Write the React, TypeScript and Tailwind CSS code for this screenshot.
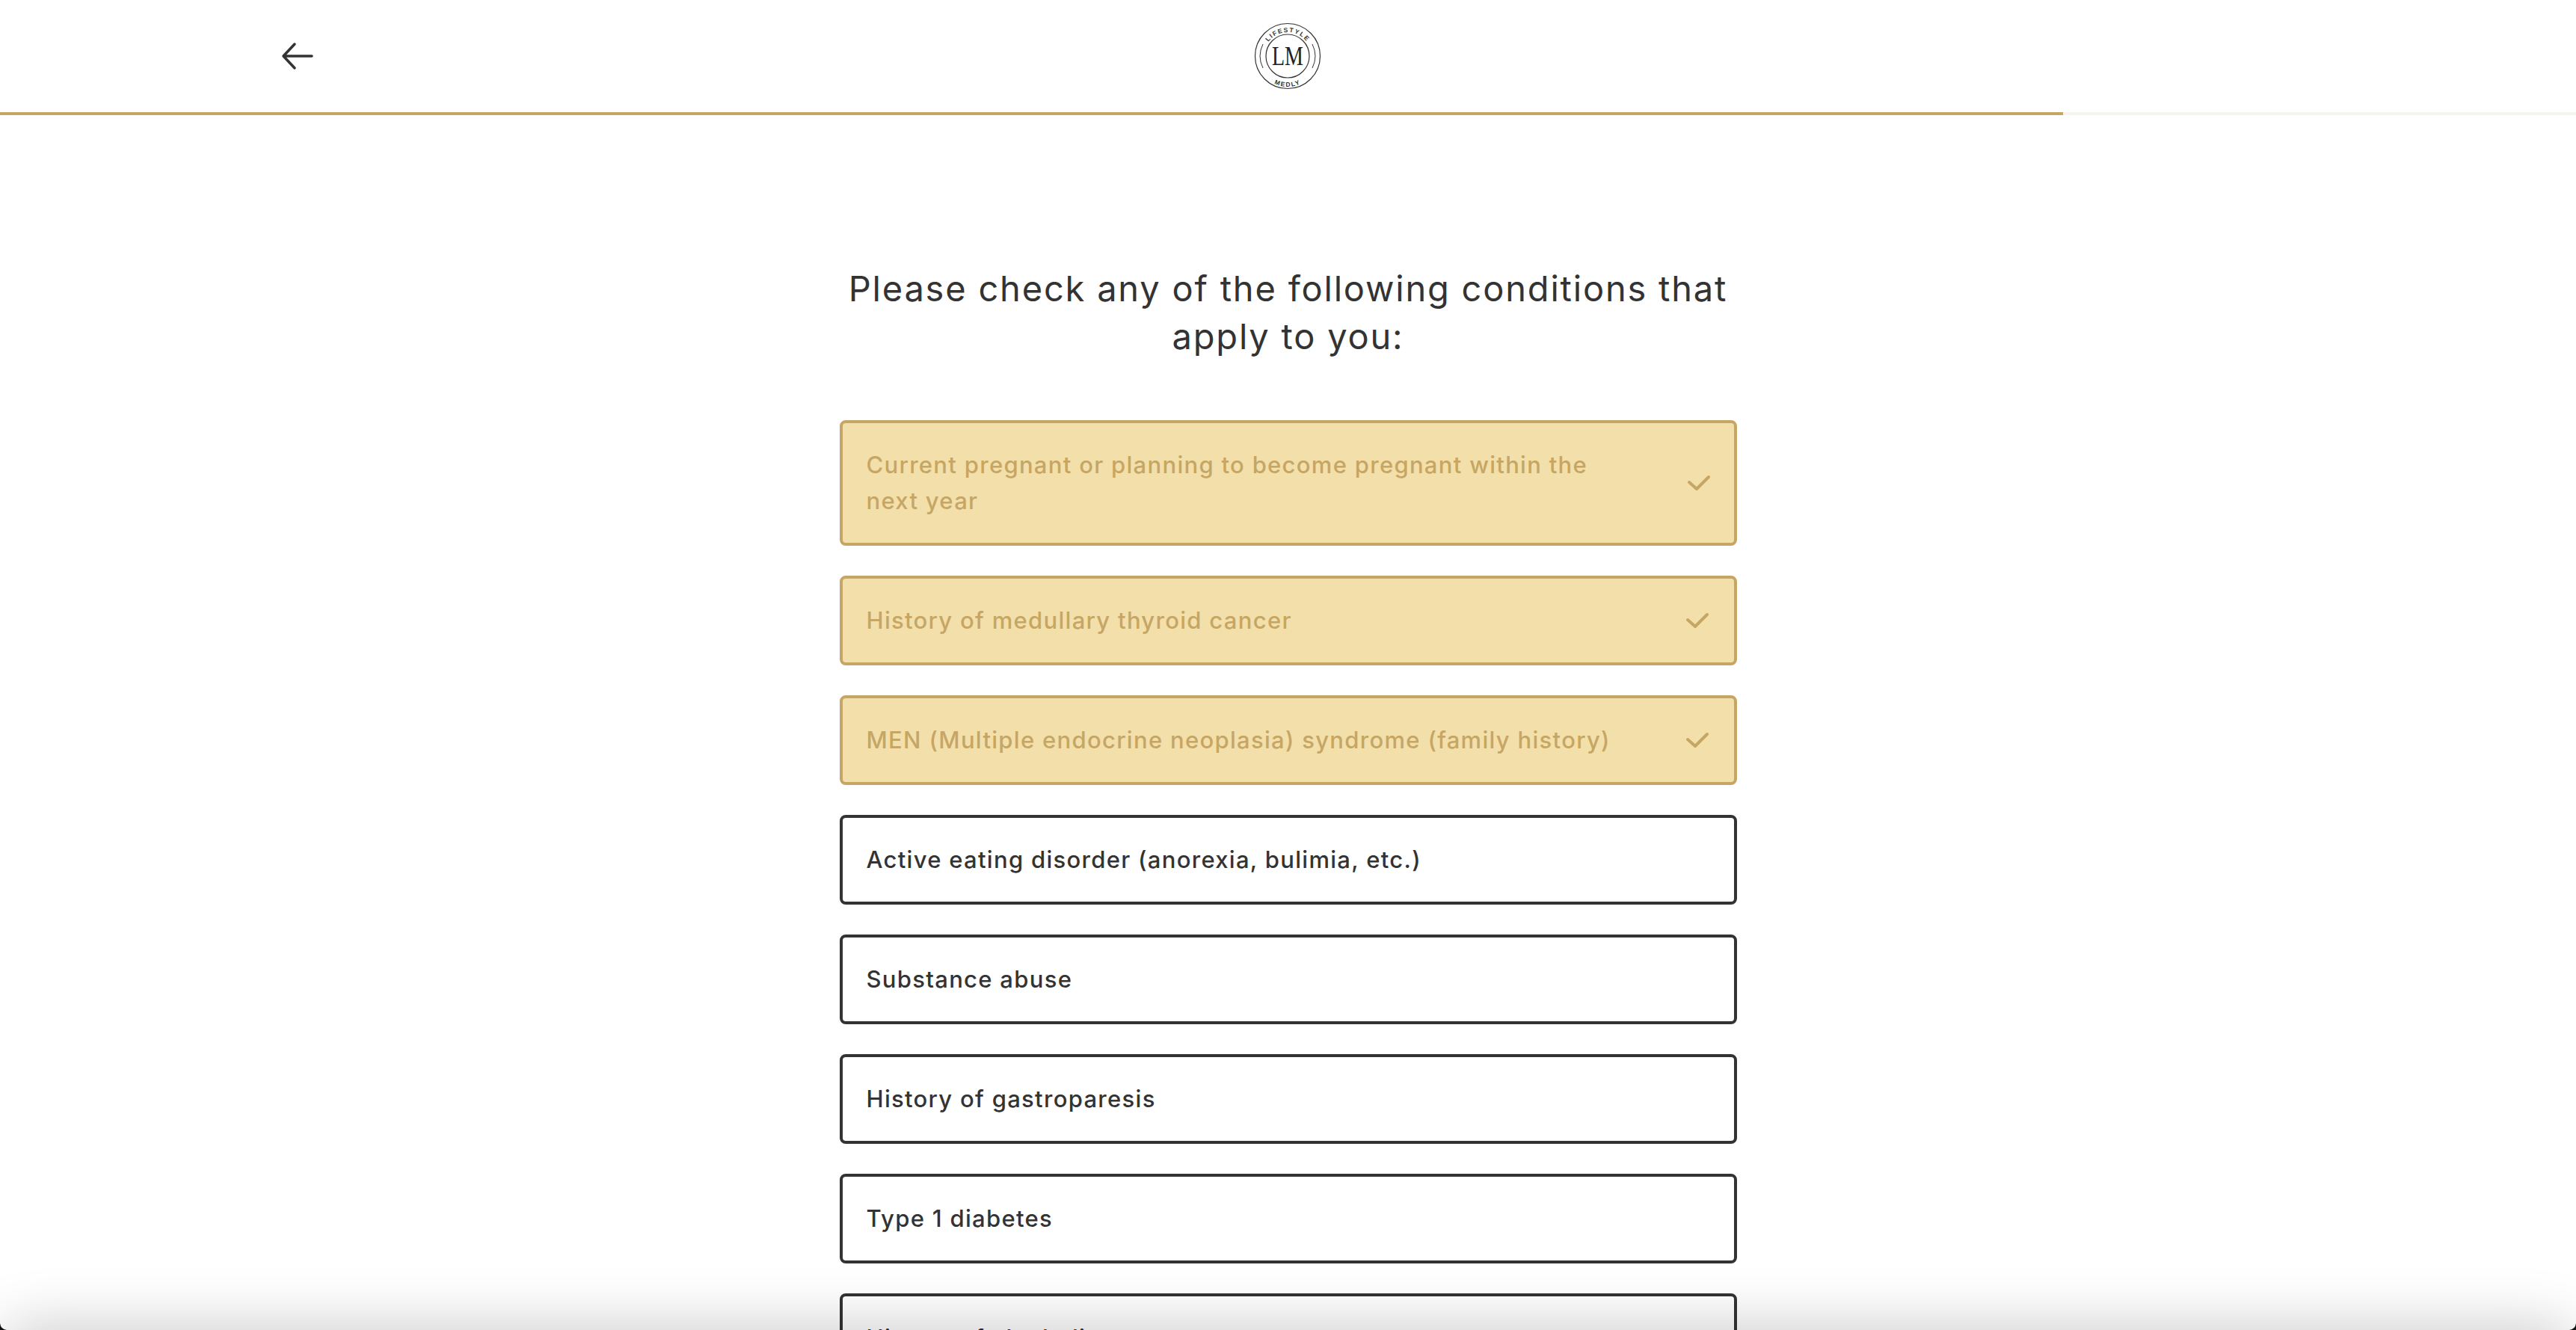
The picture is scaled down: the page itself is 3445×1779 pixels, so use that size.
const options = [
  { label: "Current pregnant or planning to become pregnant within the next year", checked: true },
  { label: "History of medullary thyroid cancer", checked: true },
  { label: "MEN (Multiple endocrine neoplasia) syndrome (family history)", checked: true },
  { label: "Active eating disorder (anorexia, bulimia, etc.)", checked: false },
  { label: "Substance abuse", checked: false },
  { label: "History of gastroparesis", checked: false },
  { label: "Type 1 diabetes", checked: false },
  { label: "History of alcoholism", checked: false },
];

const Logo = () => (
  <svg width="90" height="90" viewBox="0 0 90 90" fill="none" stroke="#333333">
    <circle cx="45" cy="45" r="43.5" strokeWidth="1.2" />
    <circle cx="45" cy="45" r="29" strokeWidth="1.2" />
    <path d="M12 29a36 36 0 0 0 0 32M78 29a36 36 0 0 1 0 32" strokeWidth="1" />
    <defs>
      <path id="logo-top" d="M13 45a32 32 0 0 1 64 0" />
      <path id="logo-bottom" d="M4 45a41 41 0 0 0 82 0" />
    </defs>
    <text fill="#333333" stroke="none" fontSize="8.5" fontWeight="700" letterSpacing="1.6" textAnchor="middle" className="font-['Liberation_Sans',sans-serif]">
      <textPath href="#logo-top" startOffset="50%">LIFESTYLE</textPath>
    </text>
    <text fill="#333333" stroke="none" fontSize="8.5" fontWeight="700" letterSpacing="1.6" textAnchor="middle" className="font-['Liberation_Sans',sans-serif]">
      <textPath href="#logo-bottom" startOffset="50%">MEDLY</textPath>
    </text>
    <text transform="translate(45 56.5) scale(1 1.25)" fill="#222222" stroke="none" fontSize="28" textAnchor="middle" className="font-['Liberation_Serif',serif]">LM</text>
  </svg>
);

export default function App() {
  return (
    <div className="relative h-[1779px] overflow-hidden bg-white font-['Inter',sans-serif] text-[#333333]">
      <header className="grid h-[150px] grid-cols-3 items-center">
        <div className="pl-[376px]">
          <svg width="44" height="38" viewBox="0 0 44 38" fill="none" stroke="#333333" strokeWidth="3.5" strokeLinecap="round" strokeLinejoin="round">
            <path d="M41 19H3M18 3 3 19l15 16" />
          </svg>
        </div>
        <div className="flex justify-center">
          <Logo />
        </div>
      </header>
      <div className="h-1 bg-[#f5f5f0]">
        <div className="h-1 w-[2759px] bg-[#c6a664]" />
      </div>
      <main className="mx-auto w-[1200px] pt-[200px]">
        <h1 className="-mx-4 text-center text-[47px] leading-[64px] tracking-[1.8px]">
          Please check any of the following conditions that apply to you:
        </h1>
        <div className="mt-[80px] flex flex-col gap-10">
          {options.map((o, i) => (
            <div
              key={o.label}
              className={`flex items-center justify-between rounded-lg border-4 py-8 pl-8 text-[31px] font-medium leading-[48px] tracking-[1.3px] ${
                i === 0 ? "pr-[31px]" : "pr-[33px]"
              } ${o.checked ? "border-[#c6a664] bg-[#f3dfaa] text-[#c6a664]" : "border-[#333333] bg-white text-[#333333]"}`}
            >
              <span className="max-w-[1030px]">{o.label}</span>
              {o.checked && (
                <svg width="32" height="24" viewBox="0 0 32 24" fill="none" stroke="#c6a664" strokeWidth="4" strokeLinecap="round" strokeLinejoin="round">
                  <path d="M3 11l10 9L29 4" />
                </svg>
              )}
            </div>
          ))}
        </div>
      </main>
      <div className="absolute inset-x-0 bottom-[-60px] h-[60px] rounded-t-[40px] shadow-[0_0_80px_rgba(0,0,0,0.25)]" />
      <svg className="absolute bottom-0 left-0" width="9" height="9" viewBox="0 0 9 9" fill="#111111">
        <path d="M0 0Q1 8 9 9H0Z" />
      </svg>
      <svg className="absolute bottom-0 right-0" width="9" height="9" viewBox="0 0 9 9" fill="#111111">
        <path d="M9 0Q8 8 0 9H9Z" />
      </svg>
    </div>
  );
}
